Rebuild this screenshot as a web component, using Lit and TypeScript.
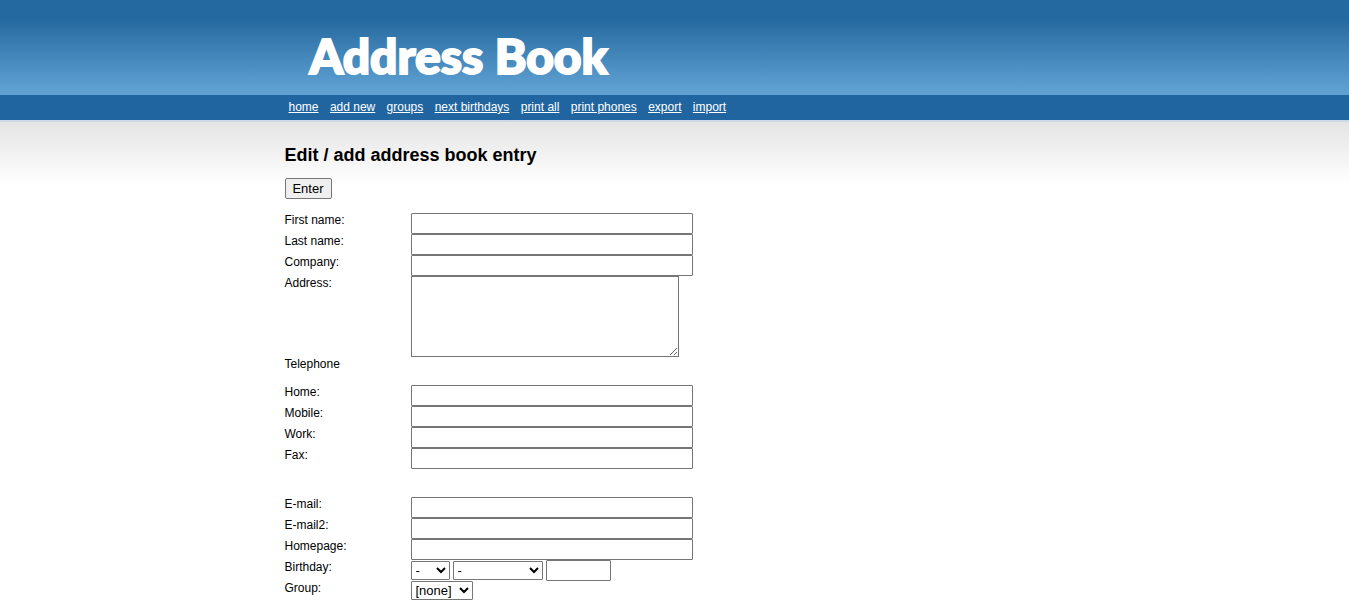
import { LitElement, html, css } from "lit";
import { customElement } from "lit/decorators.js";

interface Field {
  id: string;
  label: string;
  type?: string;
}

const NAV = ["home", "add new", "groups", "next birthdays", "print all", "print phones", "export", "import"];

const NAME_FIELDS: Field[] = [
  { id: "firstname", label: "First name:" },
  { id: "lastname", label: "Last name:" },
  { id: "company", label: "Company:" },
];

const PHONE_FIELDS: Field[] = [
  { id: "home", label: "Home:", type: "tel" },
  { id: "mobile", label: "Mobile:", type: "tel" },
  { id: "work", label: "Work:", type: "tel" },
  { id: "fax", label: "Fax:", type: "tel" },
];

const WEB_FIELDS: Field[] = [
  { id: "email", label: "E-mail:", type: "email" },
  { id: "email2", label: "E-mail2:", type: "email" },
  { id: "homepage", label: "Homepage:", type: "url" },
];

const MONTHS = ["January", "February", "March", "April", "May", "June", "July", "August", "September", "October", "November", "December"];

@customElement("app-root")
export class AppRoot extends LitElement {
  static styles = css`
    :host {
      display: block;
      color: #000;
      font: 12px/14px "Liberation Sans", Arial, sans-serif;
    }
    .inner {
      box-sizing: border-box;
      max-width: 780px;
      margin: 0 auto;
    }
    .banner {
      padding: 26px 0 9px;
      background: linear-gradient(#23699f 0, #24699f 18px, #5d9fd1 88px, #62a1d2 95px);
    }
    .logo {
      margin: 0;
      padding-left: 25px;
      color: #fff;
      font: 900 48px/60px Lato, sans-serif;
      -webkit-text-stroke: 2px #fff;
      stroke-linejoin: round;
      white-space: nowrap;
    }
    .nav {
      background: #2165a0;
      border-bottom: 2px solid #cbd9e7;
    }
    .links {
      margin: 0 auto;
      padding: 5px 0 6px;
      list-style: none;
    }
    .links li {
      display: inline;
      padding: 0 4px;
    }
    .links a {
      color: #fff;
    }
    .content {
      padding: 22px 0 8px;
      background: linear-gradient(#e4e4e4, #fff 62px);
    }
    .title {
      margin: 0 0 12px;
      font-size: 18px;
      line-height: 22px;
    }
    input,
    select,
    textarea,
    button {
      box-sizing: border-box;
      margin: 0;
      border: 1px solid #767676;
      border-radius: 1px;
      background-color: #fff;
      color: #000;
      font: 13px "Liberation Sans", Arial, sans-serif;
    }
    .enter {
      display: block;
      width: 47px;
      height: 21px;
      margin-bottom: 14px;
      padding: 0;
      border-radius: 2px;
      background-color: #efefef;
    }
    .row {
      display: grid;
      grid-template-columns: 126px 1fr;
      align-items: start;
      min-height: 21px;
    }
    .text {
      width: 282px;
      max-width: 100%;
      height: 21px;
    }
    .address {
      display: block;
      width: 268px;
      height: 81px;
      border-radius: 0;
    }
    .section {
      margin: 0;
      min-height: 28px;
      font-size: 12px;
      font-weight: 400;
      line-height: 14px;
    }
    .group {
      margin-bottom: 28px;
    }
    .date {
      display: flex;
      align-items: center;
      gap: 3px;
    }
    select {
      height: 19px;
    }
    .day {
      width: 39px;
    }
    .month {
      width: 90px;
    }
    .year {
      width: 65px;
      height: 21px;
    }
    .members {
      width: 62px;
    }
  `;

  private field(f: Field) {
    return html`<div class="row">
      <label for=${f.id}>${f.label}</label>
      <input class="text" id=${f.id} name=${f.id} type=${f.type ?? "text"} />
    </div>`;
  }

  render() {
    return html`
      <header>
        <div class="banner"><div class="inner"><div class="logo">Address Book</div></div></div>
        <nav class="nav">
          <ul class="inner links">
            ${NAV.map((item) => html`<li><a href="#">${item}</a></li> `)}
          </ul>
        </nav>
      </header>
      <main class="content">
        <form class="inner">
          <h1 class="title">Edit / add address book entry</h1>
          <button class="enter" type="button">Enter</button>
          ${NAME_FIELDS.map((f) => this.field(f))}
          <div class="row">
            <label for="address">Address:</label>
            <textarea class="address" id="address" name="address"></textarea>
          </div>
          <h2 class="section">Telephone</h2>
          <div class="group">${PHONE_FIELDS.map((f) => this.field(f))}</div>
          ${WEB_FIELDS.map((f) => this.field(f))}
          <div class="row">
            <label for="bday">Birthday:</label>
            <div class="date">
              <select class="day" id="bday" name="bday">
                <option>-</option>
                ${Array.from({ length: 31 }, (_, i) => html`<option>${i + 1}</option>`)}
              </select>
              <select class="month" name="bmonth" aria-label="Birthday month">
                <option>-</option>
                ${MONTHS.map((m) => html`<option>${m}</option>`)}
              </select>
              <input class="year" name="byear" maxlength="4" aria-label="Birthday year" />
            </div>
          </div>
          <div class="row">
            <label for="group">Group:</label>
            <select class="members" id="group" name="group">
              <option>[none]</option>
            </select>
          </div>
        </form>
      </main>
    `;
  }
}
